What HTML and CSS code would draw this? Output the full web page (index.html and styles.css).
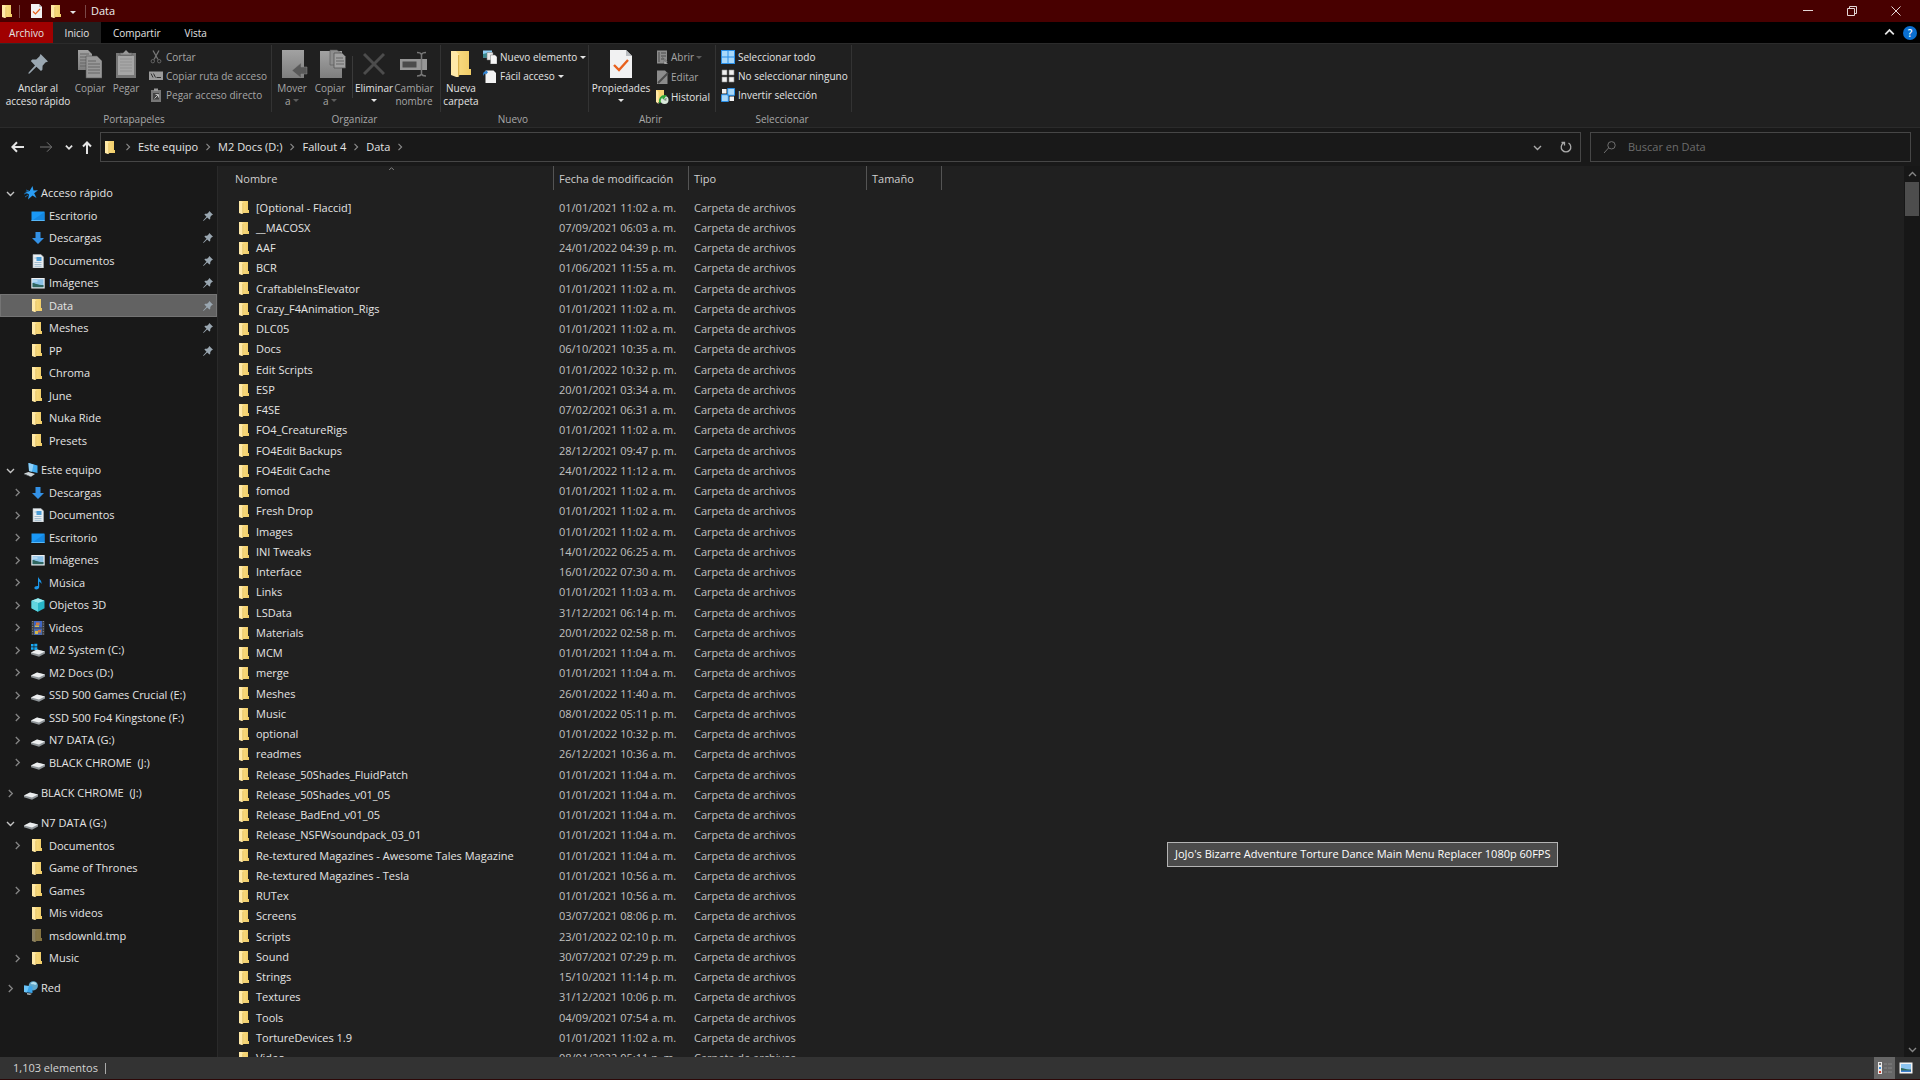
FILE: index.html
```html
<!DOCTYPE html>
<html lang="es">
<head>
<meta charset="utf-8">
<title>Data</title>
<link rel="stylesheet" href="styles.css">
</head>
<body>
<svg class="defs" aria-hidden="true">
  <defs>
    <linearGradient id="gold" x1="0" x2="1"><stop offset="0" stop-color="#fbdf8a"/><stop offset="1" stop-color="#f0cc66"/></linearGradient>
    <linearGradient id="gray" x1="0" y1="0" x2="0" y2="1"><stop offset="0" stop-color="#a2a2a2"/><stop offset="1" stop-color="#7e7e7e"/></linearGradient>
  </defs>
  <symbol id="folder" viewBox="0 0 10 13"><path d="M1 0h8v9h1v3H1z" fill="url(#gold)"/><path d="M0 0h2.4l1.4 1.6V13H2.6L0 12z" fill="#ffe9a8"/><path d="M3.8 2v10.6" stroke="#d9b24e" stroke-width=".6"/></symbol>
  <symbol id="pin" viewBox="0 0 10 10"><path d="M6.3 0L10 3.700 8.700 4.300 7.300 5.900 7.200 7.900 6.500 8.500 4.200 6.400 0.800 9.700 0.200 9.900 0.300 9.200 3.500 5.800 1.400 3.500 2.100 2.800 4.100 2.700 5.700 1.300z" fill="#9aa7b1"/></symbol>
  <symbol id="down" viewBox="0 0 9 9"><path d="M1 3l3.500 3.500L8 3" fill="none" stroke="currentColor" stroke-width="1.400"/></symbol>
  <symbol id="right" viewBox="0 0 9 9"><path d="M2.800 1l3.500 3.500L2.800 8" fill="none" stroke="currentColor" stroke-width="1.300"/></symbol>
  <symbol id="up" viewBox="0 0 9 9"><path d="M1 6l3.500-3.500L8 6" fill="none" stroke="currentColor" stroke-width="1.400"/></symbol>
  <symbol id="star" viewBox="0 0 14 14"><path d="M8.500 0l1 4.600 4.500-.4-3.800 3 2.300 4.900-4-2.600L4 13.500l1-5L1 6l4.600-.9z" fill="#2a9df4"/><path d="M0 8l3-1M1 11l3-2M2 4l3 1" stroke="#1668a8"/></symbol>
  <symbol id="desktop" viewBox="0 0 14 14"><path d="M.5 2.500h13v9.500H.5z" fill="#1a98f5"/><path d="M.5 12L13.500 3v9z" fill="#1587e0"/><path d="M.5 11.500h13" stroke="#58b8f8"/></symbol>
  <symbol id="descargas" viewBox="0 0 14 14"><path d="M4.500 1h5v6H13l-6 6-6-6h3.500z" fill="#3391e6"/></symbol>
  <symbol id="doc" viewBox="0 0 14 14"><path d="M2 .5h8l2.500 2.500v11H2z" fill="#e9edf0" stroke="#a9b3ba" stroke-width=".6"/><path d="M3.500 4h2.500M3.500 8.500h7M3.500 10.500h7M3.500 12.300h7" stroke="#8fb0c6" stroke-width=".8"/><path d="M5.500 3h5v4h-5z" fill="#4b9dd6"/></symbol>
  <symbol id="image" viewBox="0 0 14 14"><path d="M.3 2h13.400v10.500H.3z" fill="#eef0f2"/><path d="M1.500 3.200h11v8h-11z" fill="#8dc3ea"/><path d="M1.500 7c3 0 4 2 11 2v2.300h-11z" fill="#2f6660"/><path d="M1.500 5h5" stroke="#dceefa"/></symbol>
  <symbol id="pc" viewBox="0 0 14 14"><path d="M4.500 0L13.500 2.500v7.500L5 8z" fill="#44adf0"/><path d="M4.500 0l5 1.400L8 8.800 5 8z" fill="#8fd0f8"/><path d="M0 10.500l4.500-1.500 6.500 2-4 2.700z" fill="#cfd5d9"/><path d="M0 10.500l7 3.200v.3L0 11.300z" fill="#7e878d"/></symbol>
  <symbol id="music" viewBox="0 0 14 14"><path d="M7 .5c.6 3 4 3.200 3.500 7.500C9.800 6.500 9 6 8.200 5.500V11c0 1.500-1.400 2.500-2.800 2.500S3.400 12.700 3.400 11.800C3.400 10.600 5 9.800 7 10z" fill="#1c97ea"/></symbol>
  <symbol id="cube" viewBox="0 0 14 14"><path d="M7 .3l6.500 2.400v7.600L7 13.700.5 10.300V2.700z" fill="#28b6c8"/><path d="M7 .3l6.500 2.400L7 5 .5 2.700z" fill="#9be9ee"/><path d="M.5 2.700L7 5v8.700L.5 10.300z" fill="#62d6e0"/></symbol>
  <symbol id="video" viewBox="0 0 14 14"><path d="M.5 0h13v14H.5z" fill="#3c3f42"/><path d="M3 0h8v6.500H3z" fill="#3f66c2"/><path d="M3 7.500h8V14H3z" fill="#4a6bb0"/><path d="M5 1.500h3.500V4H5zM7 9h3v2.500H7z" fill="#d0763d"/><path d="M4 4.500h4V6H4zM4 10h3v3H4z" fill="#d3b94d"/><path d="M1.700 0v14M12.300 0v14" stroke="#8b9095" stroke-dasharray="1 1.500"/></symbol>
  <symbol id="drive" viewBox="0 0 14 14"><path d="M0 9.500L6 6.600l8 1.900v2l-6 3.200-8-2.400z" fill="#8f9599"/><path d="M0 9.500L6 6.600l8 1.900-6 3z" fill="#eceeef"/></symbol>
  <symbol id="cdrive" viewBox="0 0 14 14"><use href="#drive"/><path d="M0 1h2.600v2.500H0zM3.300.8h3v2.700h-3zM0 4.200h2.600v2.500H0zM3.300 4.200h3v2.700h-3z" fill="#18a8f2"/></symbol>
  <symbol id="net" viewBox="0 0 14 14"><circle cx="9.300" cy="4.800" r="4.600" fill="#5fa8cc"/><path d="M7 2c2-2 5-1 5.500.5S11 4 10 3.500 7 4 7 2z" fill="#b4e0f0"/><path d="M0 4.500l8.500 1v6.500L0 11z" fill="#3aa6ec"/><path d="M0 4.500l5 .6L3 11.400 0 11z" fill="#6cc4f8"/><path d="M3 12l5 .7-2 1.300-3-.6z" fill="#aab4ba"/></symbol>
  <symbol id="check" viewBox="0 0 22 28"><path d="M0 0h16l6 6v22H0z" fill="#f1f1f2"/><path d="M16 0v6h6z" fill="#b9bcc0"/><path d="M4 15l5 5 9-10" fill="none" stroke="#e8601c" stroke-width="2.400"/></symbol>
  <symbol id="copy" viewBox="0 0 24 28"><path d="M0 0h10l4 4v16H0z" fill="url(#gray)"/><path d="M2 4h9M2 7h10M2 10h10M2 13h10M2 16h10" stroke="#666"/><path d="M8 6h11l5 5v17H8z" fill="#989898" stroke="#555" stroke-width=".6"/><path d="M10 11h8M10 14h12M10 17h12M10 20h12M10 23h12" stroke="#666"/></symbol>
  <symbol id="paste" viewBox="0 0 20 28"><path d="M0 3h20v25H0z" fill="#777"/><path d="M2 6h16v19H2z" fill="#a6a6a6"/><path d="M4 5V3h3l3-3 3 3h3v2z" fill="#999" stroke="#555" stroke-width=".6"/><path d="M4 9h12M4 12h12M4 15h12M4 18h12M4 21h12" stroke="#929292"/></symbol>
  <symbol id="moveto" viewBox="0 0 26 28"><path d="M0 0h22v28H0z" fill="url(#gray)"/><path d="M25 17v7h-6v4l-9-7.500 9-7.500v4z" fill="#595959" stroke="#8a8a8a" stroke-width=".5"/></symbol>
  <symbol id="copyto" viewBox="0 0 26 28"><path d="M0 1h22v27H0z" fill="url(#gray)"/><path d="M10 0h7l4 3v12H10z" fill="#8e8e8e" stroke="#555" stroke-width=".6"/><path d="M14 3h8l3.500 3.500V18H14z" fill="#a0a0a0" stroke="#555" stroke-width=".8"/><path d="M16 8h7M16 11h8M16 14h8" stroke="#666"/></symbol>
  <symbol id="delete" viewBox="0 0 22 22"><path d="M1 1l20 20M21 1L1 21" stroke="#4c4c4c" stroke-width="3" fill="none"/></symbol>
  <symbol id="rename" viewBox="0 0 28 26"><path d="M0 8h27v11H0z" fill="#969696"/><path d="M2.500 10.500h14v6h-14z" fill="#4b4b4b"/><path d="M17 1.500c2 0 4 .5 4.500 2 .5-1.500 2.500-2 4.500-2M17 25c2 0 4-.5 4.500-2 .5 1.500 2.500 2 4.500 2M21.500 3v20" fill="none" stroke="#777" stroke-width="1.500"/></symbol>
  <symbol id="cut" viewBox="0 0 14 14"><path d="M4 .5l5 9M10 .5l-5 9" stroke="#777" stroke-width="1.300" fill="none"/><circle cx="3.800" cy="11.200" r="1.700" fill="none" stroke="#666"/><circle cx="10.200" cy="11.200" r="1.700" fill="none" stroke="#666"/></symbol>
  <symbol id="path" viewBox="0 0 14 14"><path d="M0 2.500h14v8.500H0z" fill="#9b9b9b"/><path d="M2 4.500l2 4M4.500 4.500l2 4" stroke="#333" fill="none"/><path d="M7.500 8.500h4.500" stroke="#333"/></symbol>
  <symbol id="shortcut" viewBox="0 0 14 14"><path d="M2 2h10v12H2z" fill="#777"/><path d="M5 .5h4V3H5z" fill="#999"/><path d="M4 5h6v6.500H4z" fill="#444"/><path d="M5.500 10.500L9 7M6.500 6.500h3v3" stroke="#bbb" fill="none"/></symbol>
  <symbol id="newitem" viewBox="0 0 14 14"><path d="M0 .5h9v7H0z" fill="#8ecdf2"/><path d="M0 4l4-1v4.500H0z" fill="#3c8b8f"/><path d="M4 2.500h6V10H4z" fill="#e6e6e6" stroke="#777" stroke-width=".5"/><path d="M7.500 5H12l2 2v7H7.500z" fill="#f6f6f6" stroke="#777" stroke-width=".5"/></symbol>
  <symbol id="easy" viewBox="0 0 14 14"><path d="M2.500 1.500h8L13 4v10H2.500z" fill="#f3f3f3"/><path d="M0 7c0-4 1-4.500 3-4.500V1l2 2.300-2 2.200V4.500C2 4.500 1 5 0 7z" fill="#2b83d6"/></symbol>
  <symbol id="open" viewBox="0 0 14 14"><path d="M2 .5h10v13H2z" fill="#8c8c8c"/><path d="M4 2v10M6 3h5M6 6h5M6 9h3" stroke="#4b4b4b"/><path d="M13 14L9 10.500V14zM7 7l6 5" fill="#bbb" stroke="#555" stroke-width=".5"/></symbol>
  <symbol id="edit" viewBox="0 0 14 14"><path d="M2 .5h8l2.500 2.500v11H2z" fill="#8c8c8c"/><path d="M3 13L13 3" stroke="#4a4a4a" stroke-width="2"/></symbol>
  <symbol id="history" viewBox="0 0 14 14"><path d="M1 0h8v12H1z" fill="#f6d472"/><path d="M1 0l2.500 2v12L1 12z" fill="#ffe9a8"/><circle cx="9.500" cy="10" r="4" fill="#d9e8da"/><path d="M5 13c-1-4 1-7 5-7l-2 3" fill="none" stroke="#2fa43a" stroke-width="1.800"/><path d="M9.500 10l2-2M9.500 10h2" stroke="#555" stroke-width=".8"/></symbol>
  <symbol id="selall" viewBox="0 0 14 14"><path d="M0 0h14v14H0z" fill="#2b8fe6"/><path d="M1 1h5.500v5.500H1zM7.500 1H13v5.500H7.500zM1 7.500h5.500V13H1zM7.500 7.500H13V13H7.500z" fill="#a8d8fa"/></symbol>
  <symbol id="selnone" viewBox="0 0 14 14"><path d="M1 1h5v5H1zM8 1h5v5H8zM1 8h5v5H1zM8 8h5v5H8z" fill="#f0f0f0" stroke="#8a8a8a" stroke-width=".6"/></symbol>
  <symbol id="selinv" viewBox="0 0 14 14"><path d="M1 1h4.500v4.500H1zM8.500 8.500H13V13H8.500z" fill="#f0f0f0"/><path d="M6.700.5h6.800v6.800H6.700zM.5 6.700h6.800v6.800H.5z" fill="#a8d8fa" stroke="#2b8fe6"/></symbol>
</svg>

<header class="titlebar">
  <svg class="i-folder"><use href="#folder"/></svg>
  <span class="bar"></span>
  <button class="quick" aria-label="Propiedades"><svg class="i-check"><use href="#check"/></svg></button>
  <button class="quick" aria-label="Nueva carpeta"><svg class="i-folder"><use href="#folder"/></svg></button>
  <button class="quick caret-btn" aria-label="Personalizar"><i class="caret"></i></button>
  <span class="bar"></span>
  <h1>Data</h1>
  <div class="window-controls">
    <button aria-label="Minimizar"><svg viewBox="0 0 10 10"><path d="M0 4.500h10"/></svg></button>
    <button aria-label="Restaurar"><svg viewBox="0 0 10 10"><path d="M.5 2.500h7v7h-7zM2.500 2V.5h7v7H8"/></svg></button>
    <button aria-label="Cerrar"><svg viewBox="0 0 10 10"><path d="M.5.5l9 9M9.500.5l-9 9"/></svg></button>
  </div>
</header>

<nav class="tabs">
  <button class="tab file">Archivo</button>
  <button class="tab active">Inicio</button>
  <button class="tab">Compartir</button>
  <button class="tab">Vista</button>
  <button class="collapse" aria-label="Minimizar la cinta"><svg class="i-chev"><use href="#up"/></svg></button>
  <button class="help" aria-label="Ayuda">?</button>
</nav>

<section class="ribbon">
  <div class="group g-clip">
    <div class="tools">
      <button class="big w68"><svg width="20" height="20"><use href="#pin"/></svg><span>Anclar al<br>acceso rápido</span></button>
      <button class="big w36 dim"><svg width="24" height="28"><use href="#copy"/></svg><span>Copiar</span></button>
      <button class="big w36 dim"><svg width="20" height="28"><use href="#paste"/></svg><span>Pegar</span></button>
      <div class="stack dim">
        <button><svg><use href="#cut"/></svg>Cortar</button>
        <button><svg><use href="#path"/></svg>Copiar ruta de acceso</button>
        <button><svg><use href="#shortcut"/></svg>Pegar acceso directo</button>
      </div>
    </div>
    <h2>Portapapeles</h2>
  </div>
  <div class="group g-org">
    <div class="tools">
      <button class="big to w40 dim"><svg width="26" height="28"><use href="#moveto"/></svg><span>Mover<br>a <i class="caret"></i></span></button>
      <button class="big to w36 dim"><svg width="26" height="28"><use href="#copyto"/></svg><span>Copiar<br>a <i class="caret"></i></span></button>
      <span class="split"></span>
      <button class="big w40"><svg width="22" height="22"><use href="#delete"/></svg><span>Eliminar<br><i class="caret"></i></span></button>
      <button class="big w40 dim"><svg width="28" height="26"><use href="#rename"/></svg><span>Cambiar<br>nombre</span></button>
    </div>
    <h2>Organizar</h2>
  </div>
  <div class="group g-new">
    <div class="tools">
      <button class="big w40"><svg width="20" height="26"><use href="#folder"/></svg><span>Nueva<br>carpeta</span></button>
      <div class="stack">
        <button><svg><use href="#newitem"/></svg>Nuevo elemento <i class="caret"></i></button>
        <button><svg><use href="#easy"/></svg>Fácil acceso <i class="caret"></i></button>
      </div>
    </div>
    <h2>Nuevo</h2>
  </div>
  <div class="group g-open">
    <div class="tools">
      <button class="big w64"><svg width="22" height="28"><use href="#check"/></svg><span>Propiedades<br><i class="caret"></i></span></button>
      <div class="stack">
        <button class="dim"><svg><use href="#open"/></svg>Abrir <i class="caret"></i></button>
        <button class="dim"><svg><use href="#edit"/></svg>Editar</button>
        <button><svg><use href="#history"/></svg>Historial</button>
      </div>
    </div>
    <h2>Abrir</h2>
  </div>
  <div class="group g-sel">
    <div class="tools">
      <div class="stack">
        <button><svg><use href="#selall"/></svg>Seleccionar todo</button>
        <button><svg><use href="#selnone"/></svg>No seleccionar ninguno</button>
        <button><svg><use href="#selinv"/></svg>Invertir selección</button>
      </div>
    </div>
    <h2>Seleccionar</h2>
  </div>
</section>

<section class="navbar">
  <div class="nav-buttons">
    <button aria-label="Atrás"><svg width="13" height="12" viewBox="0 0 13 12"><path d="M13 6H1.500M6 1.300L1.300 6 6 10.700"/></svg></button>
    <button class="off" aria-label="Adelante"><svg width="13" height="12" viewBox="0 0 13 12"><path d="M0 6h11.500M7 1.300L11.700 6 7 10.700"/></svg></button>
    <button class="narrow" aria-label="Recientes"><svg width="8" height="8" viewBox="0 0 9 9"><path d="M1 3l3.500 3.500L8 3"/></svg></button>
    <button class="narrow" aria-label="Subir"><svg width="10" height="13" viewBox="0 0 10 13"><path d="M5 13V1.500M1 5.500l4-4 4 4"/></svg></button>
  </div>
  <div class="address">
    <svg class="i-folder"><use href="#folder"/></svg>
    <svg class="sep"><use href="#right"/></svg><a href="#">Este equipo</a>
    <svg class="sep"><use href="#right"/></svg><a href="#">M2 Docs (D:)</a>
    <svg class="sep"><use href="#right"/></svg><a href="#">Fallout 4</a>
    <svg class="sep"><use href="#right"/></svg><a href="#">Data</a>
    <svg class="sep"><use href="#right"/></svg>
    <button class="history" aria-label="Ubicaciones anteriores"><svg class="i-chev"><use href="#down"/></svg></button>
    <button class="refresh" aria-label="Actualizar"><svg width="12" height="12" viewBox="0 0 12 12"><path d="M8.500 2a4.800 4.800 0 1 1-5 0M1.500 1.500h3v3" fill="none" stroke="currentColor" stroke-width="1.300"/></svg></button>
  </div>
  <label class="search">
    <svg width="12" height="12" viewBox="0 0 12 12"><path d="M0 12l4.500-5" /><circle cx="7.500" cy="4.300" r="3.700"/></svg>
    <input type="search" placeholder="Buscar en Data" aria-label="Buscar en Data">
  </label>
</section>

<main class="content">
  <nav class="tree">
    <ul>
      <li class="root"><svg class="tw open"><use href="#down"/></svg><svg class="ic"><use href="#star"/></svg>Acceso rápido</li>
      <li><svg class="ic"><use href="#desktop"/></svg>Escritorio<svg class="pin"><use href="#pin"/></svg></li>
      <li><svg class="ic"><use href="#descargas"/></svg>Descargas<svg class="pin"><use href="#pin"/></svg></li>
      <li><svg class="ic"><use href="#doc"/></svg>Documentos<svg class="pin"><use href="#pin"/></svg></li>
      <li><svg class="ic"><use href="#image"/></svg>Imágenes<svg class="pin"><use href="#pin"/></svg></li>
      <li class="selected"><svg class="ic fo"><use href="#folder"/></svg>Data<svg class="pin"><use href="#pin"/></svg></li>
      <li><svg class="ic fo"><use href="#folder"/></svg>Meshes<svg class="pin"><use href="#pin"/></svg></li>
      <li><svg class="ic fo"><use href="#folder"/></svg>PP<svg class="pin"><use href="#pin"/></svg></li>
      <li><svg class="ic fo"><use href="#folder"/></svg>Chroma</li>
      <li><svg class="ic fo"><use href="#folder"/></svg>June</li>
      <li><svg class="ic fo"><use href="#folder"/></svg>Nuka Ride</li>
      <li><svg class="ic fo"><use href="#folder"/></svg>Presets</li>
    </ul>
    <ul>
      <li class="root"><svg class="tw open"><use href="#down"/></svg><svg class="ic"><use href="#pc"/></svg>Este equipo</li>
      <li><svg class="tw"><use href="#right"/></svg><svg class="ic"><use href="#descargas"/></svg>Descargas</li>
      <li><svg class="tw"><use href="#right"/></svg><svg class="ic"><use href="#doc"/></svg>Documentos</li>
      <li><svg class="tw"><use href="#right"/></svg><svg class="ic"><use href="#desktop"/></svg>Escritorio</li>
      <li><svg class="tw"><use href="#right"/></svg><svg class="ic"><use href="#image"/></svg>Imágenes</li>
      <li><svg class="tw"><use href="#right"/></svg><svg class="ic"><use href="#music"/></svg>Música</li>
      <li><svg class="tw"><use href="#right"/></svg><svg class="ic"><use href="#cube"/></svg>Objetos 3D</li>
      <li><svg class="tw"><use href="#right"/></svg><svg class="ic"><use href="#video"/></svg>Videos</li>
      <li><svg class="tw"><use href="#right"/></svg><svg class="ic"><use href="#cdrive"/></svg>M2 System (C:)</li>
      <li><svg class="tw"><use href="#right"/></svg><svg class="ic"><use href="#drive"/></svg>M2 Docs (D:)</li>
      <li><svg class="tw"><use href="#right"/></svg><svg class="ic"><use href="#drive"/></svg>SSD 500 Games Crucial (E:)</li>
      <li><svg class="tw"><use href="#right"/></svg><svg class="ic"><use href="#drive"/></svg>SSD 500 Fo4 Kingstone (F:)</li>
      <li><svg class="tw"><use href="#right"/></svg><svg class="ic"><use href="#drive"/></svg>N7 DATA (G:)</li>
      <li><svg class="tw"><use href="#right"/></svg><svg class="ic"><use href="#drive"/></svg>BLACK CHROME &nbsp;(J:)</li>
    </ul>
    <ul>
      <li class="root"><svg class="tw"><use href="#right"/></svg><svg class="ic"><use href="#drive"/></svg>BLACK CHROME &nbsp;(J:)</li>
    </ul>
    <ul>
      <li class="root"><svg class="tw open"><use href="#down"/></svg><svg class="ic"><use href="#drive"/></svg>N7 DATA (G:)</li>
      <li><svg class="tw"><use href="#right"/></svg><svg class="ic fo"><use href="#folder"/></svg>Documentos</li>
      <li><svg class="ic fo"><use href="#folder"/></svg>Game of Thrones</li>
      <li><svg class="tw"><use href="#right"/></svg><svg class="ic fo"><use href="#folder"/></svg>Games</li>
      <li><svg class="ic fo"><use href="#folder"/></svg>Mis videos</li>
      <li><svg class="ic fo faded"><use href="#folder"/></svg>msdownld.tmp</li>
      <li><svg class="tw"><use href="#right"/></svg><svg class="ic fo"><use href="#folder"/></svg>Music</li>
    </ul>
    <ul>
      <li class="root"><svg class="tw"><use href="#right"/></svg><svg class="ic"><use href="#net"/></svg>Red</li>
    </ul>
  </nav>

  <div class="files">
    <table>
      <colgroup><col class="c-name"><col class="c-date"><col class="c-type"><col class="c-size"></colgroup>
      <thead><tr><th class="name"><span>Nombre<svg class="sort"><use href="#up"/></svg></span></th><th><span>Fecha de modificación</span></th><th><span>Tipo</span></th><th><span>Tamaño</span></th></tr></thead>
      <tbody>
        <tr><td><svg><use href="#folder"/></svg>[Optional - Flaccid]</td><td>01/01/2021 11:02 a. m.</td><td>Carpeta de archivos</td><td></td></tr>
        <tr><td><svg><use href="#folder"/></svg>__MACOSX</td><td>07/09/2021 06:03 a. m.</td><td>Carpeta de archivos</td><td></td></tr>
        <tr><td><svg><use href="#folder"/></svg>AAF</td><td>24/01/2022 04:39 p. m.</td><td>Carpeta de archivos</td><td></td></tr>
        <tr><td><svg><use href="#folder"/></svg>BCR</td><td>01/06/2021 11:55 a. m.</td><td>Carpeta de archivos</td><td></td></tr>
        <tr><td><svg><use href="#folder"/></svg>CraftableInsElevator</td><td>01/01/2021 11:02 a. m.</td><td>Carpeta de archivos</td><td></td></tr>
        <tr><td><svg><use href="#folder"/></svg>Crazy_F4Animation_Rigs</td><td>01/01/2021 11:02 a. m.</td><td>Carpeta de archivos</td><td></td></tr>
        <tr><td><svg><use href="#folder"/></svg>DLC05</td><td>01/01/2021 11:02 a. m.</td><td>Carpeta de archivos</td><td></td></tr>
        <tr><td><svg><use href="#folder"/></svg>Docs</td><td>06/10/2021 10:35 a. m.</td><td>Carpeta de archivos</td><td></td></tr>
        <tr><td><svg><use href="#folder"/></svg>Edit Scripts</td><td>01/01/2022 10:32 p. m.</td><td>Carpeta de archivos</td><td></td></tr>
        <tr><td><svg><use href="#folder"/></svg>ESP</td><td>20/01/2021 03:34 a. m.</td><td>Carpeta de archivos</td><td></td></tr>
        <tr><td><svg><use href="#folder"/></svg>F4SE</td><td>07/02/2021 06:31 a. m.</td><td>Carpeta de archivos</td><td></td></tr>
        <tr><td><svg><use href="#folder"/></svg>FO4_CreatureRigs</td><td>01/01/2021 11:02 a. m.</td><td>Carpeta de archivos</td><td></td></tr>
        <tr><td><svg><use href="#folder"/></svg>FO4Edit Backups</td><td>28/12/2021 09:47 p. m.</td><td>Carpeta de archivos</td><td></td></tr>
        <tr><td><svg><use href="#folder"/></svg>FO4Edit Cache</td><td>24/01/2022 11:12 a. m.</td><td>Carpeta de archivos</td><td></td></tr>
        <tr><td><svg><use href="#folder"/></svg>fomod</td><td>01/01/2021 11:02 a. m.</td><td>Carpeta de archivos</td><td></td></tr>
        <tr><td><svg><use href="#folder"/></svg>Fresh Drop</td><td>01/01/2021 11:02 a. m.</td><td>Carpeta de archivos</td><td></td></tr>
        <tr><td><svg><use href="#folder"/></svg>Images</td><td>01/01/2021 11:02 a. m.</td><td>Carpeta de archivos</td><td></td></tr>
        <tr><td><svg><use href="#folder"/></svg>INI Tweaks</td><td>14/01/2022 06:25 a. m.</td><td>Carpeta de archivos</td><td></td></tr>
        <tr><td><svg><use href="#folder"/></svg>Interface</td><td>16/01/2022 07:30 a. m.</td><td>Carpeta de archivos</td><td></td></tr>
        <tr><td><svg><use href="#folder"/></svg>Links</td><td>01/01/2021 11:03 a. m.</td><td>Carpeta de archivos</td><td></td></tr>
        <tr><td><svg><use href="#folder"/></svg>LSData</td><td>31/12/2021 06:14 p. m.</td><td>Carpeta de archivos</td><td></td></tr>
        <tr><td><svg><use href="#folder"/></svg>Materials</td><td>20/01/2022 02:58 p. m.</td><td>Carpeta de archivos</td><td></td></tr>
        <tr><td><svg><use href="#folder"/></svg>MCM</td><td>01/01/2021 11:04 a. m.</td><td>Carpeta de archivos</td><td></td></tr>
        <tr><td><svg><use href="#folder"/></svg>merge</td><td>01/01/2021 11:04 a. m.</td><td>Carpeta de archivos</td><td></td></tr>
        <tr><td><svg><use href="#folder"/></svg>Meshes</td><td>26/01/2022 11:40 a. m.</td><td>Carpeta de archivos</td><td></td></tr>
        <tr><td><svg><use href="#folder"/></svg>Music</td><td>08/01/2022 05:11 p. m.</td><td>Carpeta de archivos</td><td></td></tr>
        <tr><td><svg><use href="#folder"/></svg>optional</td><td>01/01/2022 10:32 p. m.</td><td>Carpeta de archivos</td><td></td></tr>
        <tr><td><svg><use href="#folder"/></svg>readmes</td><td>26/12/2021 10:36 a. m.</td><td>Carpeta de archivos</td><td></td></tr>
        <tr><td><svg><use href="#folder"/></svg>Release_50Shades_FluidPatch</td><td>01/01/2021 11:04 a. m.</td><td>Carpeta de archivos</td><td></td></tr>
        <tr><td><svg><use href="#folder"/></svg>Release_50Shades_v01_05</td><td>01/01/2021 11:04 a. m.</td><td>Carpeta de archivos</td><td></td></tr>
        <tr><td><svg><use href="#folder"/></svg>Release_BadEnd_v01_05</td><td>01/01/2021 11:04 a. m.</td><td>Carpeta de archivos</td><td></td></tr>
        <tr><td><svg><use href="#folder"/></svg>Release_NSFWsoundpack_03_01</td><td>01/01/2021 11:04 a. m.</td><td>Carpeta de archivos</td><td></td></tr>
        <tr><td><svg><use href="#folder"/></svg>Re-textured Magazines - Awesome Tales Magazine</td><td>01/01/2021 11:04 a. m.</td><td>Carpeta de archivos</td><td></td></tr>
        <tr><td><svg><use href="#folder"/></svg>Re-textured Magazines - Tesla</td><td>01/01/2021 10:56 a. m.</td><td>Carpeta de archivos</td><td></td></tr>
        <tr><td><svg><use href="#folder"/></svg>RUTex</td><td>01/01/2021 10:56 a. m.</td><td>Carpeta de archivos</td><td></td></tr>
        <tr><td><svg><use href="#folder"/></svg>Screens</td><td>03/07/2021 08:06 p. m.</td><td>Carpeta de archivos</td><td></td></tr>
        <tr><td><svg><use href="#folder"/></svg>Scripts</td><td>23/01/2022 02:10 p. m.</td><td>Carpeta de archivos</td><td></td></tr>
        <tr><td><svg><use href="#folder"/></svg>Sound</td><td>30/07/2021 07:29 p. m.</td><td>Carpeta de archivos</td><td></td></tr>
        <tr><td><svg><use href="#folder"/></svg>Strings</td><td>15/10/2021 11:14 p. m.</td><td>Carpeta de archivos</td><td></td></tr>
        <tr><td><svg><use href="#folder"/></svg>Textures</td><td>31/12/2021 10:06 p. m.</td><td>Carpeta de archivos</td><td></td></tr>
        <tr><td><svg><use href="#folder"/></svg>Tools</td><td>04/09/2021 07:54 a. m.</td><td>Carpeta de archivos</td><td></td></tr>
        <tr><td><svg><use href="#folder"/></svg>TortureDevices 1.9</td><td>01/01/2021 11:02 a. m.</td><td>Carpeta de archivos</td><td></td></tr>
        <tr><td><svg><use href="#folder"/></svg>Video</td><td>08/01/2022 05:11 p. m.</td><td>Carpeta de archivos</td><td></td></tr>
      </tbody>
    </table>
  </div>

  <div class="scrollbar">
    <button aria-label="Desplazar arriba"><svg class="i-chev"><use href="#up"/></svg></button>
    <div class="thumb"></div>
    <button class="end" aria-label="Desplazar abajo"><svg class="i-chev"><use href="#down"/></svg></button>
  </div>
  <div class="tooltip" role="tooltip">JoJo's Bizarre Adventure Torture Dance Main Menu Replacer 1080p 60FPS</div>
</main>

<footer class="status">
  <span>1,103 elementos</span><i class="tick"></i>
  <button class="view on" aria-label="Detalles"><svg width="14" height="12" viewBox="0 0 14 12"><path d="M0 0h4v12H0z" fill="#e8e8e8"/><path d="M1 2h2" stroke="#777" stroke-width="2"/><path d="M1 6h2" stroke="#3a8edb" stroke-width="2"/><path d="M1 10h2" stroke="#c8402c" stroke-width="2"/><path d="M6 2h3M10 2h4M6 6h3M10 6h4M6 10h3M10 10h4" stroke="#858585"/></svg></button>
  <button class="view" aria-label="Iconos grandes"><svg width="14" height="12" viewBox="0 0 14 12"><path d="M.5.5h13v11H.5z" fill="#f2f2f2"/><path d="M2 2h10v8H2z" fill="#8cc4f0"/><path d="M2 6c3 0 5 2 10 1.500V10H2z" fill="#2e6a5c"/><path d="M2 8.500h10V10H2z" fill="#3d7fd0"/></svg></button>
</footer>
</body>
</html>
```
FILE: styles.css
```css
* { box-sizing: border-box; }

body {
  margin: 0;
  height: 100vh;
  display: flex;
  flex-direction: column;
  overflow: hidden;
  background: #191919;
  color: #e4e4e4;
  font-family: "Open Sans", "Noto Sans", sans-serif;
  font-size: 11px;
  line-height: 16px;
}

button {
  margin: 0;
  padding: 0;
  border: 0;
  background: none;
  color: inherit;
  font: inherit;
}

svg { display: block; flex: none; }
.defs { position: absolute; width: 0; height: 0; }
.i-folder { width: 10px; height: 13px; }
.i-check { width: 11px; height: 14px; }
.i-chev { width: 9px; height: 9px; }

.caret {
  display: inline-block;
  border: 3px solid transparent;
  border-top-color: currentColor;
  border-bottom: 0;
  vertical-align: 3px;
}

/* Title bar */
.titlebar {
  display: flex;
  align-items: center;
  flex: none;
  height: 22px;
  padding: 0 2px;
  background: #480000;
}
.titlebar h1 { margin: 0 0 0 5px; font-size: 11px; font-weight: 400; color: #eee; }
.bar { width: 1px; height: 13px; margin: 0 11px 0 7px; background: #7a4848; }
.quick { margin-right: 9px; }
.caret-btn { width: 10px; margin: 0 1px 0 -2px; }
.caret-btn .caret { vertical-align: 1px; }
.caret-btn + .bar { margin: 0 0 0 6px; }
.window-controls { display: flex; margin-left: auto; }
.window-controls button {
  display: flex;
  align-items: center;
  justify-content: center;
  width: 44px;
  height: 22px;
}
.window-controls svg { width: 10px; height: 10px; fill: none; stroke: #e4d6d6; }

/* Ribbon tabs */
.tabs {
  display: flex;
  align-items: center;
  flex: none;
  height: 21px;
  padding-right: 3px;
  background: #000;
  font-size: 10px;
}
.tab { height: 21px; padding: 0 12px; }
.tab.file { width: 53px; padding: 0; background: #a00000; }
.tab.active { width: 48px; padding: 0; background: #202020; }
.collapse { margin-left: auto; padding: 4px 8px; }
.collapse svg { width: 11px; height: 11px; }
.help {
  width: 14px;
  height: 14px;
  border-radius: 50%;
  background: #0a6fd0;
  color: #fff;
  font-size: 10px;
  font-weight: 600;
  line-height: 14px;
}

/* Ribbon */
.ribbon {
  display: flex;
  flex: none;
  height: 85px;
  padding-top: 1px;
  border-top: 1px solid #2b2b2b;
  border-bottom: 1px solid #2b2b2b;
  background: #202020;
  font-size: 10px;
  line-height: 13px;
}
.group { display: flex; flex-direction: column; }
.tools { display: flex; flex: none; height: 67px; border-right: 1px solid #333; }
.group h2 {
  margin: 1px 4px 0 0;
  color: #a8a8a8;
  font-size: 10px;
  font-weight: 400;
  text-align: center;
}
.g-clip { width: 272px; }
.g-clip .tools { padding-left: 4px; }
.g-org { width: 169px; }
.g-new { width: 148px; }
.g-open { width: 127px; }
.g-sel { width: 136px; }
.big { display: flex; flex-direction: column; align-items: center; padding-top: 4px; white-space: nowrap; }
.big svg { height: 30px; margin-bottom: 3px; }
.big.to svg { margin-left: 6px; }
.big span { display: block; }
.w36 { width: 36px; }
.w40 { width: 40px; }
.w64 { width: 64px; }
.w68 { width: 68px; }
.split { width: 1px; height: 42px; margin: 11px 1px 0 4px; background: #3a3a3a; }
.stack { display: flex; flex-direction: column; padding: 4px 0 0 5px; }
.stack button { display: flex; align-items: center; gap: 3px; height: 20px; margin-bottom: -1px; white-space: nowrap; }
.stack button:first-child { margin-top: -2px; }
.stack svg { width: 14px; height: 14px; }
.g-new .stack, .g-open .stack { padding-left: 2px; }
.g-open .stack button { gap: 2px; margin-bottom: 0; }
.dim { color: #a6a6a6; }
.dim .caret { color: #5c5c5c; }

/* Navigation row */
.navbar { display: flex; align-items: center; flex: none; height: 38px; padding-right: 9px; }
.nav-buttons { display: flex; width: 100px; padding-left: 11px; }
.nav-buttons button { display: flex; align-items: center; width: 30px; height: 20px; }
.nav-buttons button.off { width: 25px; color: #777; }
.nav-buttons button.narrow { width: 18px; }
.nav-buttons svg { fill: none; stroke: currentColor; stroke-width: 2; }
.nav-buttons .off svg { stroke-width: 1; }
.address, .search {
  display: flex;
  align-items: center;
  height: 30px;
  border: 1px solid #464646;
}
.address { flex: 1; padding-left: 4px; }
.address a { color: inherit; text-decoration: none; }
.sep { width: 8px; height: 8px; margin: 0 6px; color: #8a8a8a; }
.address .i-folder + .sep { margin-left: 9px; }
.history { margin-left: auto; padding: 8px; color: #aaa; }
.refresh { padding: 8px 8px 8px 10px; color: #aaa; }
.search { width: 321px; margin-left: 9px; padding-left: 13px; color: #777; }
.search svg { fill: none; stroke: #707070; }
.search input {
  flex: 1;
  min-width: 0;
  margin: 0;
  padding: 0 0 0 12px;
  border: 0;
  outline: 0;
  background: none;
  color: #e4e4e4;
  font: inherit;
}
.search input::placeholder { color: #6c6c6c; }

/* Tree */
.content { position: relative; display: flex; flex: 1; min-height: 0; overflow: hidden; }
.tree { flex: none; width: 217px; padding-top: 16px; white-space: nowrap; }
.tree ul { margin: 0 0 8px; padding: 0; list-style: none; }
.tree ul:first-child { margin-bottom: 7px; }
.tree li { position: relative; display: flex; align-items: center; height: 22px; padding: 0 4px 0 31px; }
.tree li:nth-child(even) { height: 23px; }
.tree li.root { padding-left: 24px; }
.ic { width: 14px; height: 14px; margin-right: 4px; }
.ic.fo { width: 10px; height: 13px; margin: 0 7px 0 1px; }
.root .ic { margin-right: 3px; }
.faded { opacity: .5; }
.tw { position: absolute; left: 13px; width: 9px; height: 9px; color: #858585; }
.root .tw { left: 6px; }
.tw.open { color: #c4c4c4; }
.pin { width: 10px; height: 10px; margin-left: auto; }
.tree li.selected { background: #626262; outline: 1px solid #747474; outline-offset: -1px; }

/* File list */
.files { flex: 1; min-width: 0; padding-left: 11px; border-left: 1px solid #2a2a2a; background: #202020; }
table { width: 713px; table-layout: fixed; border-collapse: collapse; color: #c0c0c0; }
.c-name { width: 325px; }
.c-date { width: 135px; }
.c-type { width: 178px; }
.c-size { width: 75px; }
th { height: 31px; padding: 0; font-weight: 400; text-align: left; vertical-align: top; }
th span { display: block; height: 24px; padding-left: 5px; border-right: 1px solid #545454; line-height: 26px; color: #cfcfcf; }
th.name span { position: relative; padding-left: 6px; }
.sort { position: absolute; top: 0; left: 158px; width: 9px; height: 6px; color: #888; }
td { height: 20px; padding: 0 0 0 5px; white-space: nowrap; line-height: 20px; }
tr:nth-child(4n+1) td { height: 21px; }
td:first-child { display: flex; align-items: center; padding-left: 10px; color: #e4e4e4; }
td svg { width: 10px; height: 13px; margin-right: 7px; }

/* Scrollbar */
.scrollbar { display: flex; flex-direction: column; flex: none; width: 16px; padding: 0 1px; background: #171717; color: #858585; }
.scrollbar button { display: flex; align-items: center; justify-content: center; height: 16px; }
.scrollbar .end { margin-top: auto; }
.thumb { height: 34px; background: #4d4d4d; }

.tooltip {
  position: absolute;
  left: 1167px;
  top: 676px;
  padding: 3px 7px 4px;
  border: 1px solid #b4b4b4;
  background: #4b4b4b;
  color: #fff;
  white-space: nowrap;
}

/* Status bar */
.status {
  display: flex;
  align-items: center;
  flex: none;
  height: 23px;
  padding: 0 4px 0 13px;
  border-bottom: 1px solid #2c0808;
  background: #333;
  color: #d4d4d4;
}
.tick { width: 1px; height: 11px; margin-left: 7px; background: #aaa; }
.view { display: flex; align-items: center; justify-content: center; width: 21px; height: 22px; }
.view.on { margin-left: auto; background: #666; }
```
